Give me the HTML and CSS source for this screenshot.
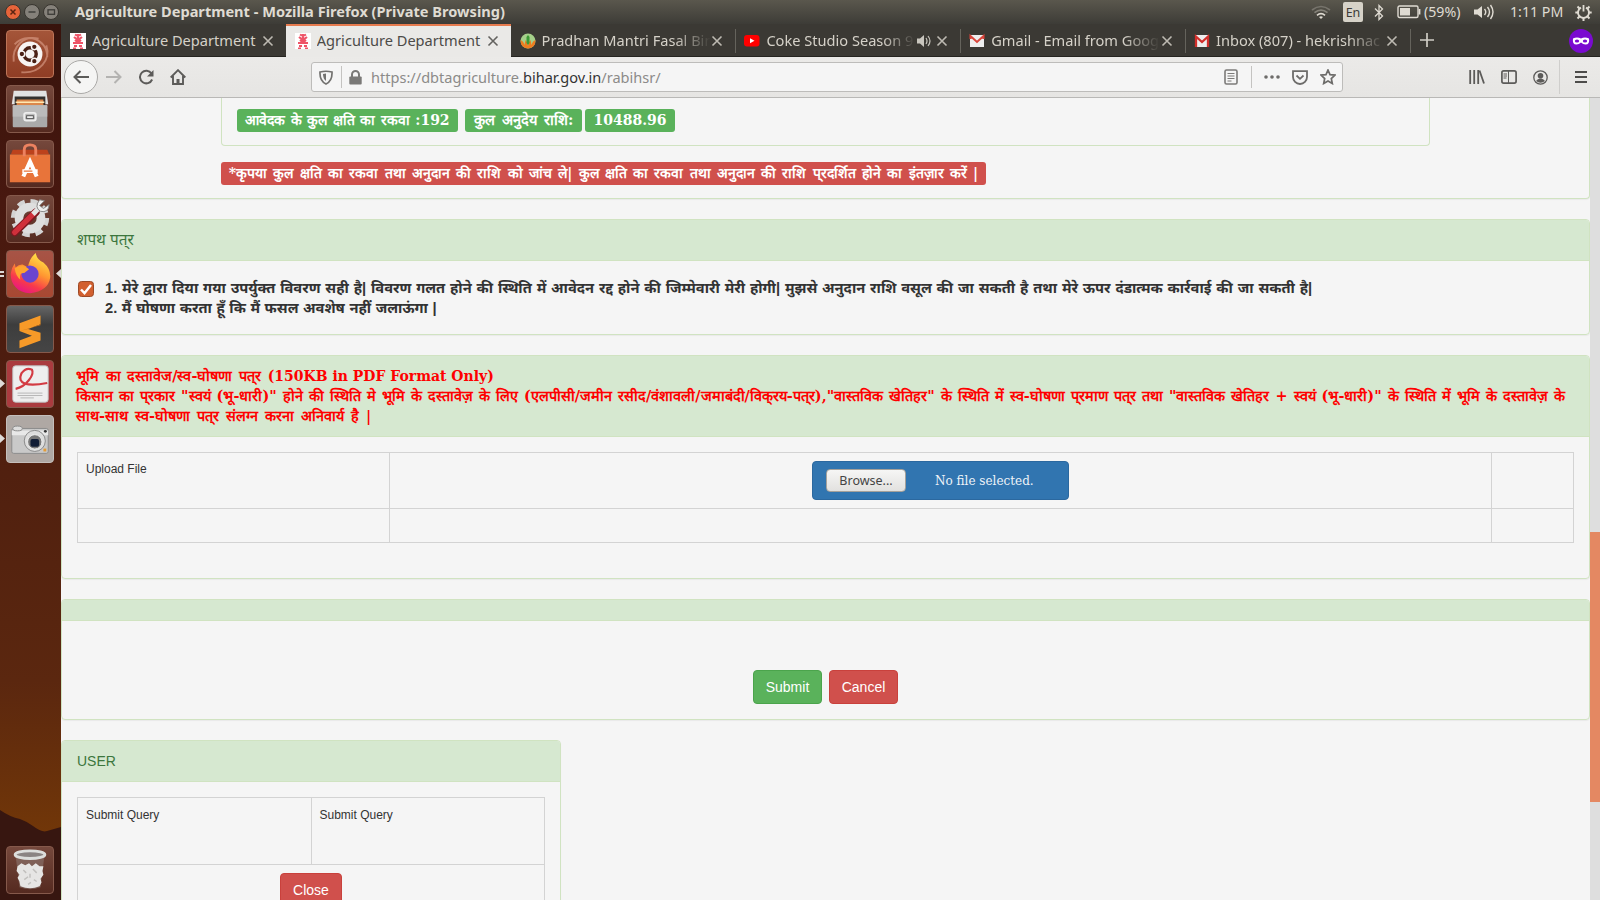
FILE: index.html
```html
<!DOCTYPE html>
<html lang="hi">
<head>
<meta charset="utf-8">
<title>Agriculture Department</title>
<link rel="stylesheet" href="styles.css">
</head>
<body>
<div class="desktop">
  <header class="topbar">
    <div class="win-buttons">
      <svg width="54" height="18" viewBox="0 0 54 18">
        <circle cx="8" cy="9" r="7.5" fill="#e6643a" stroke="#38352f"/><path d="M5.5 6.500l5 5M10.500 6.500l-5 5" stroke="#5b2412" stroke-width="1.500"/>
        <circle cx="27" cy="9" r="7.500" fill="#85817a" stroke="#38352f"/><path d="M23.500 9h7" stroke="#3c3b37" stroke-width="1.400"/>
        <circle cx="46" cy="9" r="7.500" fill="#85817a" stroke="#38352f"/><rect x="43" y="6.800" width="6.500" height="4.500" fill="none" stroke="#3c3b37" stroke-width="1.300"/>
      </svg>
    </div>
    <span class="win-title">Agriculture Department - Mozilla Firefox (Private Browsing)</span>
    <div class="indicators">
      <svg class="i-wifi" width="20" height="14" viewBox="0 0 20 14" fill="none" stroke-width="1.700"><path d="M1 5Q10-2 19 5" stroke="#77746c"/><path d="M3.500 7.700Q10 2.500 16.500 7.700" stroke="#86837a"/><path d="M6 10.400Q10 7 14 10.400" stroke="#dfdbd2"/><path d="M8 12l2 2 2-2q-2-1.500-4 0z" fill="#dfdbd2"/></svg>
      <span class="i-lang">En</span>
      <svg class="i-bt" width="10" height="17" viewBox="0 0 10 17"><path d="M1 4.500l7.500 7.500L5 15.500v-14L8.500 5 1 12.500" fill="none" stroke="#dfdbd2" stroke-width="1.300"/></svg>
      <svg class="i-bat" width="25" height="14" viewBox="0 0 25 14"><rect x="1" y="1" width="20" height="11.500" rx="1.500" fill="none" stroke="#dfdbd2" stroke-width="1.400"/><rect x="3" y="3" width="10" height="7.500" fill="#dfdbd2"/><path d="M22.500 4v5.500" stroke="#dfdbd2" stroke-width="1.800"/></svg>
      <span class="i-pct">(59%)</span>
      <svg class="i-vol" width="20" height="16" viewBox="0 0 20 16"><path d="M0 5.500h3.500L8 2v12l-4.500-3.500H0z" fill="#dfdbd2"/><path d="M10.500 5q2.500 3 0 6M13.500 3q4 5 0 10M16.500 1q5 7 0 14" fill="none" stroke="#dfdbd2" stroke-width="1.400"/></svg>
      <span class="i-time">1:11 PM</span>
      <svg class="i-gear" width="17" height="17" viewBox="0 0 17 17" fill="none" stroke="#dfdbd2"><path d="M6 3.600a5.500 5.500 0 1 0 5 0" stroke-width="1.900"/><path d="M8.500 1v6.500" stroke-width="1.800"/><path d="M2.500 2.500l2 2M14.500 2.500l-2 2M.3 8.500H3M14 8.500h2.700M2.500 14.500l2-2M14.500 14.500l-2-2M8.500 14v3" stroke-width="2"/></svg>
    </div>
  </header>

  <div class="workspace">
    <nav class="launcher">
      <div class="app dash"><svg viewBox="0 0 48 48"><path d="M7 32C5 16 18 4 33 8M15 43C34 45 46 30 41 15M8 14C20 1 42 8 42 27" fill="none" stroke="#d99b85" stroke-width="2" opacity=".65"/><circle cx="24" cy="24" r="13" fill="#f7f4f3"/><circle cx="24" cy="24" r="6.500" fill="none" stroke="#4a2015" stroke-width="3.600"/><g fill="#4a2015" stroke="#f7f4f3" stroke-width="1.500"><circle cx="15.500" cy="24" r="3"/><circle cx="28.500" cy="16.500" r="3"/><circle cx="28.500" cy="31.500" r="3"/></g></svg></div>
      <div class="app"><svg viewBox="0 0 48 48"><path d="M7 5h34l2 14H5z" fill="#e2e2e2"/><path d="M8 11h32v10H8z" fill="#33302e"/><path d="M10 14h28v7H10z" fill="#db874b"/><path d="M9 17h30" stroke="#ffe8b2" stroke-width="1.500"/><rect x="6" y="20" width="36" height="23" rx="1" fill="#aaa"/><rect x="6" y="20" width="36" height="12" fill="#bbb"/><rect x="18" y="28" width="12" height="8" rx="2" fill="none" stroke="#ededed" stroke-width="2"/><rect x="20.500" y="31" width="7" height="3" fill="#eee" stroke="#555"/></svg></div>
      <div class="app"><svg viewBox="0 0 48 48"><path d="M6 9h36l2 5H4z" fill="#bc421c"/><path d="M3 14h42v29H3z" fill="#e8743a"/><path d="M18 16V9q0-5 6-5t6 5v7" fill="none" stroke="#ec8260" stroke-width="3"/><path d="M17 37l7-15.500L31 37" fill="none" stroke="#fff" stroke-width="4.200"/><path d="M16 31.500h16" stroke="#fff" stroke-width="4"/><path d="M17.500 31.500h9" stroke="#e8743a" stroke-width="1.200"/></svg></div>
      <div class="app"><svg viewBox="0 0 48 48"><circle cx="24" cy="23" r="17" fill="none" stroke="#d3d3d3" stroke-width="6" stroke-dasharray="7.500 5.850"/><circle cx="24" cy="23" r="11.500" fill="none" stroke="#dedede" stroke-width="9"/><path d="M8 38L30 17" stroke="#7d1820" stroke-width="8" stroke-linecap="round"/><path d="M8 38L29 17" stroke="#d0303b" stroke-width="5.500" stroke-linecap="round"/><path d="M27 19l8-8" stroke="#e4e4e4" stroke-width="5"/><path d="M34 4q-6 8 1 12 8 2 9-7l-6 4-4-3 5-5z" fill="#eee" stroke="#888"/></svg></div>
      <div class="app firefox"><svg viewBox="0 0 48 48"><defs><linearGradient id="fx" x1=".8" y1="0" x2=".3" y2="1"><stop offset="0" stop-color="#fff04a"/><stop offset=".45" stop-color="#ff9531"/><stop offset=".75" stop-color="#f8394b"/><stop offset="1" stop-color="#e61587"/></linearGradient></defs><path d="M24 44C11 44 3 34 4 23q1-6 4-10l1 4q3-3 7-3l6 3q1-9 8-15 1 7 8 10 8 7 7 16-2 14-21 16z" fill="url(#fx)"/><circle cx="24" cy="24" r="9" fill="#6a45cf"/><path d="M8 18q9-5 15 1l-5 4q-6-1-4 7-5-4-6-12z" fill="#ffa52e"/></svg></div>
      <div class="app sublime"><svg viewBox="0 0 48 48"><path d="M13 18l22-8v9l-13 5 13 4v8l-22 8v-8l13-5-13-5z" fill="#f79a28"/><path d="M13 26l22-6v-1l-13 5z" fill="#c26c16"/></svg></div>
      <div class="app reader"><svg viewBox="0 0 48 48"><rect x="6" y="5" width="37" height="38" rx="3" fill="#eee" stroke="#bbb"/><path d="M9 29C20 27 29 14 26 9q-6-3-11 4c-5 11 6 14 27 10" fill="none" stroke="#d33b43" stroke-width="2.300"/><path d="M11 33.500h26M11 36h26M14 38.500h14" stroke="#b5b5b5"/></svg></div>
      <div class="app camera"><svg viewBox="0 0 48 48"><rect x="5" y="13" width="38" height="26" rx="2" fill="#c9c9c9" stroke="#8a8a8a"/><path d="M5 15h38v5H5z" fill="#e8e8e8"/><ellipse cx="11" cy="13" rx="5" ry="2.500" fill="#ddd" stroke="#888"/><circle cx="29" cy="26" r="11" fill="#ddd" stroke="#888"/><circle cx="29" cy="27" r="7.500" fill="#777" stroke="#eee"/><rect x="24.500" y="24" width="9" height="8" rx="2" fill="#111d36"/><rect x="38" y="34" width="3" height="3" fill="#e39b36"/><circle cx="40" cy="16" r="1.500" fill="#333"/></svg></div>
      <div class="app trash"><svg viewBox="0 0 48 48"><path d="M9 9l4 33q11 4 22 0l4-33z" fill="#9a8984" opacity=".45"/><path d="M11 20l4-3 4 2 4-2 3 3 4-3 4 3 4 0-1 5 1 4-3 4 1 4-2 4q-10 4-20 0l-1-5-2-4 2-3-3-4z" fill="#e6e5e4"/><path d="M17 24l3 3M27 23l4 4M18 34l4-3M28 34l3 2M24 28v4M22 39l3-2" stroke="#c2c0be" stroke-width="1.500"/><ellipse cx="24" cy="8" rx="15.500" ry="4" fill="#8a8483" stroke="#dcdedc" stroke-width="3"/></svg></div>
      <svg class="pips" width="61" height="240" viewBox="0 0 61 240" fill="#dedad7"><path d="M0 23h4v2H0zM0 27h4v2H0zM61 21v9l-5-4.500zM0 131l5 4.500-5 4.500zM0 186l5 4.500-5 4.500z"/></svg>
      <svg class="hills" width="61" height="90" viewBox="0 0 61 90"><path d="M0 0q10 7 20 9 8 3 13 7 9 7 14 5l14-4v73H0z" fill="#371610"/></svg>
    </nav>

    <main class="browser">
      <div class="tabs">
        <div class="tab"><svg class="fav" viewBox="0 0 16 16"><path fill="#fff" d="M0 0h16v16H0z"/><path d="M5 1.500q3 2 6 0M4 4q4 4 8 0M8 1v8M3 10h10M4 13h3M9 13h3M3 15.500h3M10 15.500h3M5 7q3 3 6 0" stroke="#ee5468" stroke-width="2" fill="none"/></svg><span class="cap">Agriculture Department</span><svg class="x" viewBox="0 0 12 12"><path d="M1.500 1.500l9 9M10.500 1.500l-9 9"/></svg></div>
        <div class="tab active"><svg class="fav" viewBox="0 0 16 16"><path fill="#fff" d="M0 0h16v16H0z"/><path d="M5 1.500q3 2 6 0M4 4q4 4 8 0M8 1v8M3 10h10M4 13h3M9 13h3M3 15.500h3M10 15.500h3M5 7q3 3 6 0" stroke="#ee5468" stroke-width="2" fill="none"/></svg><span class="cap">Agriculture Department</span><svg class="x" viewBox="0 0 12 12"><path d="M1.500 1.500l9 9M10.500 1.500l-9 9"/></svg></div>
        <div class="tab"><svg class="fav" viewBox="0 0 16 16"><circle cx="8" cy="8" r="7.500" fill="#a5d08a"/><path d="M.5 7q3 1 4 5l1-5q2 2 2.500 6 .5-4 2.500-6l1 5q1-4 4-5 0 8-7.500 8.500Q.5 15 .5 7z" fill="#ee7d20"/><path d="M6.500 10V4L8 2l1.500 2v6L8 12z" fill="#3b9a34"/></svg><span class="cap fade">Pradhan Mantri Fasal Bin</span><svg class="x" viewBox="0 0 12 12"><path d="M1.500 1.500l9 9M10.500 1.500l-9 9"/></svg></div>
        <div class="tab sep"><svg class="fav" viewBox="0 0 16 16"><rect y="2" width="15.500" height="11.500" rx="3" fill="#f00"/><path d="M6 5.200v5L10.500 7.700z" fill="#fff"/></svg><span class="cap fade short">Coke Studio Season 9</span><svg class="snd" width="15" height="14" viewBox="0 0 15 14"><path d="M0 4.500h3L7 1v12L3 9.500H0z" fill="#c9c6be"/><path d="M9 4q2 3 0 6M11 2q4 5 0 10" stroke="#c9c6be" fill="none" stroke-width="1.200"/></svg><svg class="x" viewBox="0 0 12 12"><path d="M1.500 1.500l9 9M10.500 1.500l-9 9"/></svg></div>
        <div class="tab sep"><svg class="fav" viewBox="0 0 16 16"><path d="M1 2h14v12H1z" fill="#eee"/><path d="M1.500 6V3L8 9l6.500-6v3" fill="none" stroke="#d9453b" stroke-width="2"/></svg><span class="cap fade">Gmail - Email from Goog</span><svg class="x" viewBox="0 0 12 12"><path d="M1.500 1.500l9 9M10.500 1.500l-9 9"/></svg></div>
        <div class="tab sep"><svg class="fav" viewBox="0 0 16 16"><path d="M1 2h14v12H1z" fill="#eee"/><path d="M2 14V3.500L8 9l6-5.500V14" fill="none" stroke="#d22f2b" stroke-width="2.300"/></svg><span class="cap fade">Inbox (807) - hekrishnac</span><svg class="x" viewBox="0 0 12 12"><path d="M1.500 1.500l9 9M10.500 1.500l-9 9"/></svg></div>
        <div class="newtab sep"><svg width="14" height="14" viewBox="0 0 14 14"><path d="M7 0v14M0 7h14" stroke="#d0cdc5" stroke-width="1.700"/></svg></div>
        <svg class="mask" width="24" height="24" viewBox="0 0 24 24"><circle cx="12" cy="12" r="12" fill="#7a0bd0"/><path d="M4 9.500q4-2 8 0 4-2 8 0 1 6-3.500 6-2.500 0-4.500-2-2 2-4.500 2Q3 15.500 4 9.500z" fill="#fff"/><ellipse cx="8" cy="12" rx="2.200" ry="1.500" fill="#7a0bd0"/><ellipse cx="16" cy="12" rx="2.200" ry="1.500" fill="#7a0bd0"/></svg>
      </div>

      <div class="toolbar">
        <span class="back"><svg width="16" height="14" viewBox="0 0 16 14"><path d="M16 7H2M7.500 1L1.500 7l6 6" fill="none" stroke="#5c5b59" stroke-width="2"/></svg></span>
        <svg class="fwd" width="16" height="14" viewBox="0 0 16 14"><path d="M0 7h14M8.500 1l6 6-6 6" fill="none" stroke="#b4b3b1" stroke-width="2"/></svg>
        <svg class="reload" width="16" height="16" viewBox="0 0 16 16"><path d="M13.500 4.500a6.300 6.300 0 1 0 .6 6" fill="none" stroke="#5c5b59" stroke-width="2"/><path d="M15.500 1v6.500H9z" fill="#5c5b59"/></svg>
        <svg class="home" width="16" height="16" viewBox="0 0 16 16"><path d="M.7 8.500L8 1.200l7.300 7.300M3 7v8h10V7" fill="none" stroke="#5c5b59" stroke-width="1.900"/><path d="M6.500 15v-5h3v5" fill="#5c5b59"/></svg>
        <div class="urlbar">
          <svg class="shield" width="14" height="15" viewBox="0 0 14 15"><path d="M1 2q6-1.500 12 0 .5 9-6 12Q.5 11 1 2z" fill="none" stroke="#737270" stroke-width="1.700"/><path d="M7 3.500v7.500Q4 9 4 4z" fill="#737270"/></svg>
          <span class="bar"></span>
          <svg class="lock" width="13" height="15" viewBox="0 0 13 15"><rect x=".3" y="6.500" width="12.400" height="8" rx="1" fill="#7a7977"/><path d="M3 8V4.500a3.500 3.500 0 0 1 7 0V8" fill="none" stroke="#7a7977" stroke-width="2"/></svg>
          <span class="url">https://dbtagriculture.<b>bihar.gov.in</b>/rabihsr/</span>
          <svg class="rd" width="14" height="16" viewBox="0 0 14 16"><rect x="1" y="1" width="12" height="14" rx="1.500" fill="none" stroke="#7c7b79" stroke-width="1.600"/><path d="M3.500 4.500h7M3.500 7h7M3.500 9.500h7M3.500 12h4" stroke="#7c7b79"/></svg>
          <span class="bar right"></span>
          <svg class="dots" width="16" height="4" viewBox="0 0 16 4" fill="#6d6c6a"><circle cx="2" cy="2" r="1.800"/><circle cx="8" cy="2" r="1.800"/><circle cx="14" cy="2" r="1.800"/></svg>
          <svg class="pocket" width="16" height="15" viewBox="0 0 16 15" fill="none" stroke="#6d6c6a" stroke-width="1.800"><path d="M1 1.200h14V7A7 7 0 0 1 1 7z"/><path d="M4.500 5.500L8 8.800l3.500-3.300"/></svg>
          <svg class="star" width="16" height="16" viewBox="0 0 16 16"><path d="M8 1l2 4.600 5 .5-3.700 3.400 1 5L8 12l-4.300 2.500 1-5L1 6.100l5-.5z" fill="none" stroke="#6d6c6a" stroke-width="1.700"/></svg>
        </div>
        <svg class="lib" width="16" height="14" viewBox="0 0 16 14"><path d="M1.200 0v14M5.200 0v14M9.200 0v14" stroke="#5c5b59" stroke-width="1.800"/><path d="M10.500.5L15 13.500" stroke="#5c5b59" stroke-width="1.800"/></svg>
        <svg class="side" width="16" height="14" viewBox="0 0 16 14"><rect x=".9" y=".9" width="14.200" height="12.200" rx="1.800" fill="none" stroke="#5c5b59" stroke-width="1.700"/><path d="M7.500 1v12M2.500 4H6M2.500 6H6M2.500 8h3" stroke="#5c5b59"/></svg>
        <svg class="acct" width="15" height="15" viewBox="0 0 15 15"><circle cx="7.500" cy="7.500" r="6.700" fill="none" stroke="#5c5b59" stroke-width="1.300"/><circle cx="7.500" cy="5.700" r="2.800" fill="#5c5b59"/><path d="M3 11q1.500-2.500 4.500-2.500T12 11q-4.500 3.500-9 0z" fill="#5c5b59"/></svg>
        <span class="menu"><svg width="12" height="12" viewBox="0 0 12 12"><path d="M0 1h12M0 6h12M0 11h12" stroke="#4d4c4a" stroke-width="1.800"/></svg></span>
      </div>

      <div class="viewport">
        <div class="page">
          <section class="panel first">
            <div class="inner"><span class="label green l1"><span>आवेदक के कुल क्षति का रकवा :192</span></span><span class="label green l2"><span>कुल अनुदेय राशि:</span></span><span class="label green l3"><span>10488.96</span></span></div>
            <div class="label red"><span>*कृपया कुल क्षति का रकवा तथा अनुदान की राशि को जांच ले| कुल क्षति का रकवा तथा अनुदान की राशि प्‌रदर्शित होने का इंतज़ार करें |</span></div>
          </section>

          <section class="panel oath">
            <div class="heading h-oath">शपथ पत्‌र</div>
            <div class="oath-body">
              <svg class="check" width="16" height="16" viewBox="0 0 16 16"><rect x=".5" y=".5" width="15" height="15" rx="3" fill="#d2602f" stroke="#9c4a27"/><path d="M3 8.500l3.500 3.700L13 4" fill="none" stroke="#fff" stroke-width="2.500"/></svg>
              <div class="oath-lines"><p>1. मेरे द्वारा दिया गया उपर्युक्त विवरण सही है| विवरण गलत होने की स्थिति में आवेदन रद्द होने की जिम्मेवारी मेरी होगी| मुझसे अनुदान राशि वसूल की जा सकती है तथा मेरे ऊपर दंडात्मक कार्रवाई की जा सकती है|</p><p class="o2">2. मैं घोषणा करता हूँ कि मैं फसल अवशेष नहीं जलाऊंगा |</p></div>
            </div>
          </section>

          <section class="panel docs">
            <div class="heading red-text"><p class="d1">भूमि का दस्तावेज/स्व-घोषणा पत्‌र <span class="latin">(150KB in PDF Format Only)</span></p><p class="d2">किसान का प्‌रकार "स्वयं (भू-धारी)" होने की स्थिति मे भूमि के दस्तावेज़ के लिए (एलपीसी/जमीन रसीद/वंशावली/जमाबंदी/विक्‌रय-पत्‌र),"वास्तविक खेतिहर" के स्थिति में स्व-घोषणा प्‌रमाण पत्‌र तथा "वास्तविक खेतिहर + स्वयं (भू-धारी)" के स्थिति में भूमि के दस्तावेज़ के</p><p class="d3">साथ-साथ स्व-घोषणा पत्‌र संलग्न करना अनिवार्य है |</p></div>
            <div class="grid upload">
              <div class="cell">Upload File</div>
              <div class="cell mid"><div class="filebox"><span class="browse">Browse...</span><span class="nofile">No file selected.</span></div></div>
              <div class="cell"></div><div class="cell"></div><div class="cell"></div><div class="cell"></div>
            </div>
          </section>

          <section class="panel actions">
            <div class="heading thin"></div>
            <div class="buttons"><span class="btn ok">Submit</span><span class="btn no">Cancel</span></div>
          </section>

          <section class="panel user">
            <div class="heading">USER</div>
            <div class="grid query">
              <div class="cell">Submit Query</div><div class="cell">Submit Query</div>
              <div class="cell wide"><span class="btn no">Close</span></div>
            </div>
          </section>
        </div>
        <div class="scroll"><div class="thumb"></div></div>
      </div>
    </main>
  </div>
</div>
</body>
</html>
```
FILE: styles.css
```css
* { box-sizing: border-box; }
body { margin: 0; font-family: "Liberation Sans", sans-serif; }
p { margin: 0; }
svg { display: block; flex: none; }
.desktop { width: 1600px; height: 900px; overflow: hidden; display: flex; flex-direction: column; }

/* system bar */
.topbar { height: 24px; flex: none; display: flex; align-items: center; background: linear-gradient(#5a574d, #3d3c37); color: #dfdbd2; font-family: "Noto Sans", sans-serif; white-space: nowrap; padding-left: 5px; }
.win-buttons { width: 70px; }
.win-title { font-weight: 700; font-size: 14.580px; width: 1236px; margin-top: -2px; }
.indicators { display: flex; align-items: center; font-size: 14.200px; }
.i-wifi { margin-right: 12px; }
.i-lang { width: 20px; height: 20px; margin-right: 11px; border-radius: 2px; background: #d6d2c8; color: #3c3b37; font-size: 12.500px; line-height: 21px; text-align: center; }
.i-bt { margin-right: 13px; }
.i-bat { margin-right: 2px; }
.i-pct { width: 50px; margin-top: -1px; }
.i-time { width: 65px; margin-top: -1px; }
.i-vol { margin-right: 16px; }

.workspace { display: flex; flex: 1; min-height: 0; }

/* launcher */
.launcher { position: relative; width: 61px; flex: none; display: flex; flex-direction: column; gap: 7px; padding: 6px 0 6px 6px; background: linear-gradient(#37130c 0, #48180f 20%, #52210f 55%, #5b270f 75%, #723708 93%); }
.app { position: relative; z-index: 1; width: 48px; height: 48px; border-radius: 4px; border: 1px solid #85594b; background: linear-gradient(#75483c, #552a20); overflow: hidden; flex: none; }
.app svg { width: 46px; height: 46px; }
.dash { background: linear-gradient(#a45539, #8f3d25); border-color: #bd7558; }
.firefox { background: linear-gradient(#a75446, #a84832); }
.sublime { background: linear-gradient(#666, #3d3d3d 40%, #454545); }
.reader { background: #aa3b3f; }
.camera { background: #afa8a4; border-color: #c5bfbc; }
.trash { margin-top: auto; }
.pips { position: absolute; left: 0; top: 224px; }
.hills { position: absolute; left: 0; bottom: 0; }

/* browser chrome */
.browser { flex: 1; min-width: 0; display: flex; flex-direction: column; font-family: "Noto Sans", sans-serif; }
.tabs { height: 33px; flex: none; display: flex; background: #3b3934; color: #d5d1c8; border-bottom: 1px solid #252420; }
.tab { width: 224.800px; flex: none; display: flex; align-items: center; padding: 1px 12px 0 9px; font-size: 14.600px; white-space: nowrap; }
.tab.active { height: 33px; padding-top: 0; padding-bottom: 0; background: #eae9e7; color: #4c4b48; box-shadow: inset 0 2px #e67b4f; }
.fav { width: 16px; height: 16px; margin-right: 6px; }
.cap { width: 174px; flex: none; overflow: hidden; margin: -2px -8px 0 0; line-height: 26px; }
.x { width: 12px; height: 12px; margin-left: auto; fill: none; stroke: currentColor; stroke-width: 1.600; opacity: .85; }
.fade { -webkit-mask-image: linear-gradient(90deg, #000 76%, transparent 97%); mask-image: linear-gradient(90deg, #000 76%, transparent 97%); }
.cap.short { width: 154px; }
.snd { margin-left: auto; margin-right: 4px; }
.snd + .x { margin-left: 0; }
.sep { background: linear-gradient(#65635c, #65635c) 0 5px / 1px 24px no-repeat; }
.newtab { width: 50px; padding: 9px 0 0 10px; }
.mask { margin: 5px 7px 0 auto; }
.toolbar { height: 41px; flex: none; display: flex; align-items: center; background: linear-gradient(#ebeae8, #e6e5e3); border-bottom: 1px solid #b9b8b6; padding-left: 3px; }
.back { width: 34px; height: 34px; border-radius: 50%; border: 1px solid #aaa9a7; background: #f5f5f4; display: grid; place-items: center; }
.fwd { margin-left: 8px; }
.reload { margin-left: 16px; }
.home { margin-left: 16px; }
.urlbar { margin-left: 125px; width: 1032px; height: 30px; border: 1px solid #bdbcba; border-radius: 3px; background: #f5f5f5; display: flex; align-items: center; padding-left: 7px; }
.bar { width: 1px; height: 22px; margin-left: 8px; background: #c4c3c1; }
.bar.right { margin-left: 13px; }
.lock { margin-left: 7px; }
.url { margin: 0 auto 0 9px; font-size: 14.550px; color: #8c8b89; }
.url b { font-weight: 400; color: #333; }
.dots { margin-left: 12px; }
.pocket { margin-left: 12px; }
.star { margin: 0 6px 0 12px; }
.lib { margin-left: 126px; }
.side { margin-left: 16px; }
.acct { margin-left: 16px; }
.menu { margin-left: 11px; height: 34px; border-left: 1px solid #cfcecc; padding: 11px 0 0 15px; }

/* page */
.viewport { flex: 1; display: flex; min-height: 0; background: #f5f5f5; color: #333; }
.page { flex: 1; overflow: hidden; font: 14px/20px "Liberation Sans", "Noto Sans Devanagari", sans-serif; }
.scroll { width: 10px; background: #dedede; }
.thumb { margin-top: 434px; height: 270px; background: #e48862; }
.panel { border: 1px solid #d0e3c1; border-radius: 4px; margin-bottom: 20px; box-shadow: 0 1px 1px rgba(0, 0, 0, .05); }
.first { height: 101px; border-top: 0; border-radius: 0 0 4px 4px; padding-left: 159px; }
.inner { width: 1209px; height: 48px; border: 1px solid #d0e3c1; border-top: 0; border-radius: 0 0 4px 4px; padding: 11px 0 0 15px; display: flex; }
.label { display: inline-flex; align-items: center; justify-content: center; height: 23px; padding-bottom: 2px; border-radius: 3px; color: #fff; font: 700 14px/20px "DejaVu Serif", serif; white-space: nowrap; }
.green { background: #5ab25b; }
.l1 { width: 221px; margin-right: 7px; word-spacing: .6px; }
.l2 { width: 117px; margin-right: 3px; font-size: 14.600px; word-spacing: 2px; }
.l3 { width: 90px; }
.red { background: #d0504c; width: 765px; margin-top: 16px; word-spacing: 1.400px; }
.heading { background: #d6e8d0; border-bottom: 1px solid #d0e3c1; padding: 10px 15px; color: #3c763d; border-radius: 3px 3px 0 0; }
.h-oath { font-size: 15.300px; }
.oath { height: 116px; }
.oath-body { display: flex; padding: 17px 16px; font-weight: 700; white-space: nowrap; }
.oath-lines { font-size: 14.700px; word-spacing: .78px; }
.o2 { word-spacing: .5px; }
.check { margin: 3px 11px 0 0; }
.docs { height: 224px; }
.red-text { color: #f00; font: 700 14.400px/20px "DejaVu Serif", serif; white-space: nowrap; padding-left: 14px; height: 81px; }
.d1 { word-spacing: 1.600px; }
.latin { font-size: 14px; word-spacing: 0; }
.d2 { word-spacing: 1.020px; }
.d3 { word-spacing: 2px; }
.grid { display: grid; font-size: 12px; border: solid #d3d3d3; border-width: 1px 0 0 1px; }
.cell { border: solid #d3d3d3; border-width: 0 1px 1px 0; padding: 6px 8px; }
.upload { margin: 15px; grid-template-columns: 312px 1102px 1fr; grid-template-rows: 56px 34px; }
.mid { display: flex; justify-content: center; padding: 8px; }
.filebox { width: 257px; height: 39px; background: #3175b0; border: 1px solid #2b689f; border-radius: 4px; display: flex; align-items: center; padding-left: 13px; }
.browse { width: 80px; height: 23px; border: 1px solid #a5a19b; border-radius: 4px; background: linear-gradient(#f6f6f5, #e2e1df); color: #444; font: 12.500px/21px "Noto Sans", sans-serif; text-align: center; }
.nofile { margin-left: 29px; color: #eef3f8; font: 12px/20px "DejaVu Serif", serif; }
.actions { height: 121px; }
.thin { height: 21px; padding: 0; }
.buttons { display: flex; justify-content: center; gap: 7px; padding-top: 49px; }
.btn { display: inline-block; height: 34px; border: 1px solid; border-radius: 4px; padding: 6px 11px; font-size: 14px; line-height: 20px; color: #fff; text-align: center; }
.buttons .btn { width: 69px; }
.ok { background: #5ab25b; border-color: #4ba44c; }
.no { background: #d0504c; border-color: #c9413c; }
.user { width: 500px; }
.query { margin: 15px; grid-template-columns: 233.500px 1fr; grid-template-rows: 67px 50px; }
.query .cell { padding-top: 7px; }
.query .wide { grid-column: span 2; text-align: center; padding-top: 8px; }
.wide .btn { width: 62px; }
```
